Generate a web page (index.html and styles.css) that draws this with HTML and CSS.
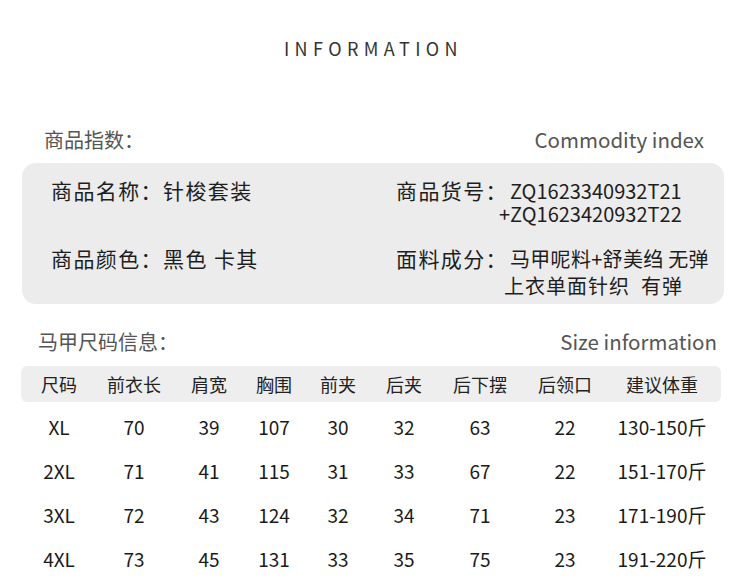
FILE: index.html
```html
<!DOCTYPE html>
<html lang="zh">
<head>
<meta charset="utf-8">
<link rel="stylesheet" href="styles.css">
</head>
<body>
<div class="page">
  <h1 class="title">INFORMATION</h1>

  <div class="sec-head sec-head-1">
    <span>商品指数：</span>
    <span class="en">Commodity index</span>
  </div>

  <div class="info-box">
    <div class="cell left">商品名称：针梭套装</div>
    <div class="cell right">
      <div class="line">商品货号：<span class="gap latin">ZQ1623340932T21</span></div>
      <div class="line sub sub-a latin">+ZQ1623420932T22</div>
    </div>
    <div class="cell left row2">商品颜色：黑色 卡其</div>
    <div class="cell right row2">
      <div class="line">面料成分：<span class="gap mix">马甲呢料+舒美绉 无弹</span></div>
      <div class="line sub sub-b">上衣单面针织&nbsp; 有弹</div>
    </div>
  </div>

  <div class="sec-head sec-head-2">
    <span>马甲尺码信息：</span>
    <span class="en">Size information</span>
  </div>

  <div class="table">
    <div class="row head">
      <span>尺码</span><span>前衣长</span><span>肩宽</span><span>胸围</span><span>前夹</span><span>后夹</span><span>后下摆</span><span>后领口</span><span>建议体重</span>
    </div>
    <div class="row">
      <span>XL</span><span>70</span><span>39</span><span>107</span><span>30</span><span>32</span><span>63</span><span>22</span><span>130-150斤</span>
    </div>
    <div class="row">
      <span>2XL</span><span>71</span><span>41</span><span>115</span><span>31</span><span>33</span><span>67</span><span>22</span><span>151-170斤</span>
    </div>
    <div class="row">
      <span>3XL</span><span>72</span><span>43</span><span>124</span><span>32</span><span>34</span><span>71</span><span>23</span><span>171-190斤</span>
    </div>
    <div class="row">
      <span>4XL</span><span>73</span><span>45</span><span>131</span><span>33</span><span>35</span><span>75</span><span>23</span><span>191-220斤</span>
    </div>
  </div>
</div>
</body>
</html>
```

FILE: styles.css
```css
html, body {
  margin: 0;
  padding: 0;
  background: #ffffff;
}
body {
  font-family: "Noto Sans CJK SC", "Noto Sans", sans-serif;
  color: #222;
  width: 750px;
  height: 584px;
  overflow: hidden;
}
.page {
  padding-top: 36px;
}
.title {
  margin: 0;
  font-size: 18px;
  line-height: 24px;
  font-weight: 400;
  color: #333;
  text-align: center;
  letter-spacing: 5.4px;
  padding-right: 3px;
}
.sec-head {
  display: flex;
  justify-content: space-between;
  align-items: baseline;
  font-size: 20px;
  line-height: 28px;
  color: #555;
}
.sec-head .en {
  font-size: 20.5px;
}
.sec-head-1 {
  margin-top: 65px;
  padding: 0 46px 0 44px;
}
.sec-head-2 {
  margin-top: 23px;
  padding: 0 33px 0 38px;
}
.info-box {
  margin: 9px 26px 0 22px;
  height: 141px;
  box-sizing: border-box;
  background: #ececec;
  border-radius: 14px;
  padding: 14px 0 0 29px;
  display: grid;
  grid-template-columns: 345px 1fr;
  grid-template-rows: 68px 1fr;
  font-size: 21px;
  line-height: 26px;
  color: #1e1e1e;
  letter-spacing: 1.4px;
}
.line {
  white-space: nowrap;
}
.gap {
  margin-left: 2px;
  letter-spacing: 0;
}
.latin {
  font-size: 20px;
}
.mix {
  letter-spacing: 0.3px;
  font-size: 20px;
}
.sub {
  letter-spacing: 0;
}
.sub-a {
  padding-left: 103px;
  line-height: 22px;
  margin-top: -1px;
}
.sub-b {
  padding-left: 108px;
  letter-spacing: 1px;
  font-size: 20px;
  margin-top: 1px;
}
.table {
  margin: 10px 29px 0 21px;
}
.row {
  display: grid;
  grid-template-columns: 76px 74px 76px 54px 74px 58px 94px 76px 118px;
  height: 44px;
  align-items: center;
  font-size: 19px;
  color: #1a1a1a;
}
.row span {
  text-align: center;
  white-space: nowrap;
}
.row.head {
  height: 36px;
  background: #eeeeee;
  border-radius: 6px;
  margin-bottom: 2px;
  font-size: 18px;
  color: #222;
}
```
